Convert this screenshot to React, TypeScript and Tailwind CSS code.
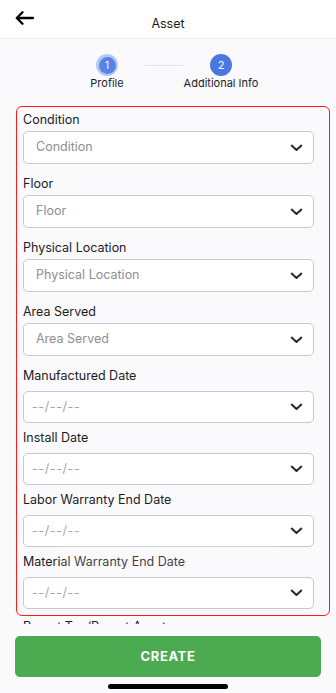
import React from "react";

type Field = {
  label: string;
  placeholder: string;
  kind: "select" | "date";
};

const fields: Field[] = [
  { label: "Condition", placeholder: "Condition", kind: "select" },
  { label: "Floor", placeholder: "Floor", kind: "select" },
  { label: "Physical Location", placeholder: "Physical Location", kind: "select" },
  { label: "Area Served", placeholder: "Area Served", kind: "select" },
  { label: "Manufactured Date", placeholder: "--/--/--", kind: "date" },
  { label: "Install Date", placeholder: "--/--/--", kind: "date" },
  { label: "Labor Warranty End Date", placeholder: "--/--/--", kind: "date" },
  { label: "Material Warranty End Date", placeholder: "--/--/--", kind: "date" },
];

function Chevron() {
  return (
    <svg width="13" height="8" viewBox="0 0 13 8" fill="none">
      <path
        d="M1.7 1.6L6.5 6L11.3 1.6"
        stroke="#2b2b2e"
        strokeWidth="2.1"
        strokeLinecap="round"
        strokeLinejoin="round"
      />
    </svg>
  );
}

function FormField({ field }: { field: Field }) {
  const isDate = field.kind === "date";
  return (
    <div className={isDate ? "mb-[5px]" : "mb-[10px]"}>
      <div className="text-[12.5px] leading-[20px] text-[#1c1c1e]">{field.label}</div>
      <div
        className={
          isDate
            ? "mt-[5px] h-[32px] flex items-center justify-between rounded-[5px] border border-[#c9c9cd] bg-white pl-[8px] pr-[10px]"
            : "mt-px h-[33px] flex items-center justify-between rounded-[5px] border border-[#c9c9cd] bg-white pl-[12px] pr-[10px]"
        }
      >
        <span
          className={
            isDate
              ? "text-[12.5px] text-[#a3a3a8] tracking-[0.6px]"
              : "text-[12.5px] text-[#8e8e93]"
          }
        >
          {field.placeholder}
        </span>
        <Chevron />
      </div>
    </div>
  );
}

export default function App() {
  return (
    <div
      className="relative w-[336px] h-[693px] flex flex-col overflow-hidden bg-[#faf9fc]"
      style={{ fontFamily: "Inter, 'Noto Sans', sans-serif" }}
    >
      {/* header */}
      <div className="h-[39px] shrink-0 bg-white border-b border-[#eeedf2] grid grid-cols-[1fr_auto_1fr]">
        <div className="pl-[15px] pt-[11px]">
          <svg width="19" height="14" viewBox="0 0 19 14" fill="none">
            <path
              d="M18 7H2M7.5 1.3L1.8 7L7.5 12.7"
              stroke="#000"
              strokeWidth="2.3"
              strokeLinecap="round"
              strokeLinejoin="round"
            />
          </svg>
        </div>
        <div className="pt-[15px] text-[12.5px] leading-[18px] text-[#1c1c1e]">Asset</div>
        <div />
      </div>

      {/* scroll area */}
      <div className="flex-1 overflow-hidden">
        {/* stepper */}
        <div className="pt-[15px] flex items-start pl-[77px]">
          <div className="w-[60px] flex flex-col items-center">
            <div className="w-[22px] h-[22px] rounded-full bg-[#b4c8f5] flex items-center justify-center">
              <div className="w-[17px] h-[17px] rounded-full bg-[#5a82e4] flex items-center justify-center text-[10px] leading-none text-white">
                1
              </div>
            </div>
            <div className="text-[11px] leading-[14px] text-[#1c1c1e]">Profile</div>
          </div>
          <div className="w-[38px] ml-[8px] mt-[11px] h-px bg-[#e2e1e8]" />
          <div className="w-[76px] flex flex-col items-center">
            <div className="w-[22px] h-[22px] rounded-full bg-[#4a78e0] flex items-center justify-center text-[11px] leading-none text-white">
              2
            </div>
            <div className="text-[11px] leading-[14px] text-[#1c1c1e] whitespace-nowrap">
              Additional Info
            </div>
          </div>
        </div>

        {/* form */}
        <div className="mt-[16px] ml-[16px] mr-[6px] rounded-[6px] border border-[#ff1a1a] pt-[3px] pb-[1px] pl-[6px] pr-[15px]">
          {fields.map((f) => (
            <FormField key={f.label} field={f} />
          ))}
        </div>
        <div className="mt-px ml-[23px] text-[12.5px] leading-[20px] text-[#1c1c1e]">
          Parent Tag/Parent Asset
        </div>
      </div>

      {/* footer */}
      <div className="h-[69px] shrink-0 bg-[#faf9fc] flex flex-col items-center">
        <button className="mt-[12px] w-[306px] h-[41px] rounded-[5px] bg-[#4caa50] text-white text-[13px] font-bold tracking-[0.6px]">
          CREATE
        </button>
        <div className="mt-[7px] w-[120px] h-[5px] rounded-full bg-black" />
      </div>

      {/* faint fading toast */}
      <div className="absolute left-[60px] top-[528px] w-[214px] h-[47px] rounded-[10px] bg-white/15" />
    </div>
  );
}
